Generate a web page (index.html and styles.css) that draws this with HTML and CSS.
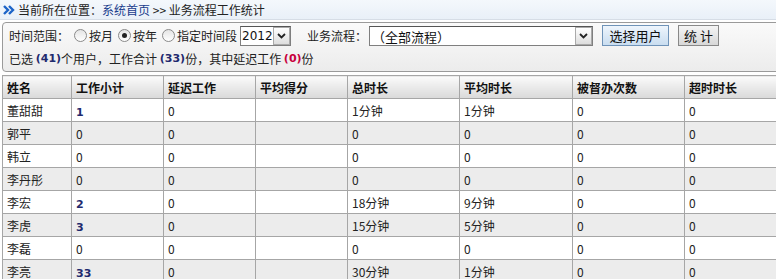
FILE: index.html
```html
<!DOCTYPE html>
<html lang="zh-CN">

<head>
    <meta charset="UTF-8" />
    <title>业务流程工作统计</title>
    <link rel="stylesheet" href="styles.css">
</head>

<body>
    <div class="nav">
        <svg class="nav-icon" width="12" height="10" viewBox="0 0 12 10"><path d="M1 1 L5 5 L1 9 M6 1 L10 5 L6 9" fill="none" stroke="#1c64c8" stroke-width="2.4"/></svg>
        当前所在位置：<a href="#">系统首页</a>&nbsp;&gt;&gt; 业务流程工作统计
    </div>

    <div class="panel">
        <div class="panel-row">
            <span>时间范围：</span>
            <label class="radio"><input type="radio" name="range">按月</label>
            <label class="radio"><input type="radio" name="range" checked>按年</label>
            <label class="radio"><input type="radio" name="range">指定时间段</label>
            <span class="sel sel-year">
                <select><option>2012</option></select>
                <span class="sel-arrow"><svg width="9" height="6" viewBox="0 0 9 6"><path d="M1 1 L4.5 4.5 L8 1" fill="none" stroke="#222" stroke-width="1.8"/></svg></span>
            </span>
            <span class="flow-label">业务流程：</span>
            <span class="sel sel-flow">
                <select><option>（全部流程）</option></select>
                <span class="sel-arrow"><svg width="9" height="6" viewBox="0 0 9 6"><path d="M1 1 L4.5 4.5 L8 1" fill="none" stroke="#222" stroke-width="1.8"/></svg></span>
            </span>
            <button class="btn btn-blue">选择用户</button>
            <button class="btn btn-gray">统 计</button>
        </div>
        <div class="panel-row summary">
            已选&nbsp;<b class="num">(41)</b>个用户，工作合计&nbsp;<b class="num">(33)</b>份，其中延迟工作&nbsp;<b class="num red">(0)</b>份
        </div>
    </div>

    <table class="grid">
        <colgroup>
            <col style="width:69px">
            <col style="width:92px">
            <col style="width:92px">
            <col style="width:92px">
            <col style="width:112px">
            <col style="width:113px">
            <col style="width:112px">
            <col style="width:100px">
        </colgroup>
        <thead>
            <tr>
                <th>姓名</th>
                <th>工作小计</th>
                <th>延迟工作</th>
                <th>平均得分</th>
                <th>总时长</th>
                <th>平均时长</th>
                <th>被督办次数</th>
                <th>超时时长</th>
            </tr>
        </thead>
        <tbody id="rows"></tbody>
    </table>

    <script>
        var data = [
            ["董甜甜", 1, "1分钟", "1分钟"],
            ["郭平", 0, "0", "0"],
            ["韩立", 0, "0", "0"],
            ["李丹彤", 0, "0", "0"],
            ["李宏", 2, "18分钟", "9分钟"],
            ["李虎", 3, "15分钟", "5分钟"],
            ["李磊", 0, "0", "0"],
            ["李亮", 33, "30分钟", "1分钟"]
        ];

        var html = "";
        data.forEach(function (r) {
            var count = r[1] > 0 ? '<b class="num">' + r[1] + '</b>' : r[1];
            html += "<tr>" +
                "<td>" + r[0] + "</td>" +
                "<td>" + count + "</td>" +
                "<td>0</td>" +
                "<td></td>" +
                "<td>" + r[2] + "</td>" +
                "<td>" + r[3] + "</td>" +
                "<td>0</td>" +
                "<td>0</td>" +
                "</tr>";
        });
        document.getElementById("rows").innerHTML = html;
    </script>
</body>
</html>
```

FILE: styles.css
```css
body {
    margin: 0;
    font-family: "Noto Sans CJK SC", "DejaVu Sans", sans-serif;
    font-size: 12px;
    color: #222;
    background: #fff;
    overflow: hidden;
    width: 776px;
}

.nav {
    height: 19px;
    line-height: 20px;
    padding-left: 3px;
    background: linear-gradient(#f4f8fc, #e9f0f8);
    border-bottom: 1px solid #d6dde6;
    display: flex;
    align-items: center;
}

.nav-icon {
    margin-right: 3px;
}

.nav a {
    color: #1a3c8c;
    text-decoration: none;
}

.panel {
    margin: 2px 0 0 2px;
    width: 790px;
    height: 48px;
    border: 1px solid #9a9a9a;
    border-radius: 4px;
    background: linear-gradient(#fafafa, #ececec);
}

.panel-row {
    display: flex;
    align-items: center;
    height: 25px;
    padding-left: 6px;
    white-space: nowrap;
}

.summary {
    height: 21px;
}

.radio {
    display: inline-flex;
    align-items: center;
    margin-left: 5px;
}

.radio input {
    appearance: none;
    width: 13px;
    height: 13px;
    margin: 0 2px 0 0;
    border: 1px solid #8a8a8a;
    border-radius: 50%;
    background: linear-gradient(#e4e4e4, #fff);
    display: inline-flex;
    align-items: center;
    justify-content: center;
}

.radio input:checked::after {
    content: "";
    width: 5px;
    height: 5px;
    border-radius: 50%;
    background: #222;
}

.sel {
    display: inline-flex;
    height: 18px;
    border: 1px solid #7f7f7f;
    border-top-color: #555;
    background: #fff;
}

.sel select {
    appearance: none;
    border: none;
    outline: none;
    background: transparent;
    font-family: inherit;
    font-size: 13px;
    padding: 0 2px;
    color: #111;
}

.sel-year {
    margin-left: 3px;
    width: 49px;
}

.sel-year select {
    width: 32px;
    font-family: "DejaVu Sans", sans-serif;
    font-size: 12px;
    padding: 0 1px;
}

.sel-flow {
    width: 222px;
}

.sel-flow select {
    flex: 1;
}

.sel-arrow {
    width: 15px;
    border: 1px solid #aaa;
    background: linear-gradient(#fff, #ddd);
    display: flex;
    align-items: center;
    justify-content: center;
}

.flow-label {
    margin-left: 16px;
    margin-right: 2px;
}

.btn {
    height: 21px;
    font-family: inherit;
    font-size: 13px;
    padding: 0;
    color: #111;
    white-space: nowrap;
    cursor: pointer;
}

.btn-blue {
    margin-left: 9px;
    width: 67px;
    border: 1px solid #6f93b8;
    background: linear-gradient(#eef5fc, #c9ddf0);
}

.btn-gray {
    margin-left: 9px;
    width: 41px;
    border: 1px solid #888;
    background: linear-gradient(#f4f4f4, #d8d8d8);
}

.num {
    color: #1f2a6e;
    font-family: "DejaVu Sans", sans-serif;
    font-size: 11px;
}

.red {
    color: #c8003c;
}

.grid {
    margin: 3px 0 0 2px;
    border-collapse: collapse;
    table-layout: fixed;
    width: 782px;
}

.grid th,
.grid td {
    border: 1px solid #a6a6a6;
    text-align: left;
    padding: 0 4px;
    white-space: nowrap;
    overflow: hidden;
}

.grid th {
    height: 22px;
    font-weight: bold;
    color: #111;
    background: linear-gradient(#fbfbfb, #e8e8e8 55%, #d9d9d9);
}

.grid td {
    height: 22px;
}

.grid tbody tr:nth-child(even) td {
    background: #ececec;
}
```
